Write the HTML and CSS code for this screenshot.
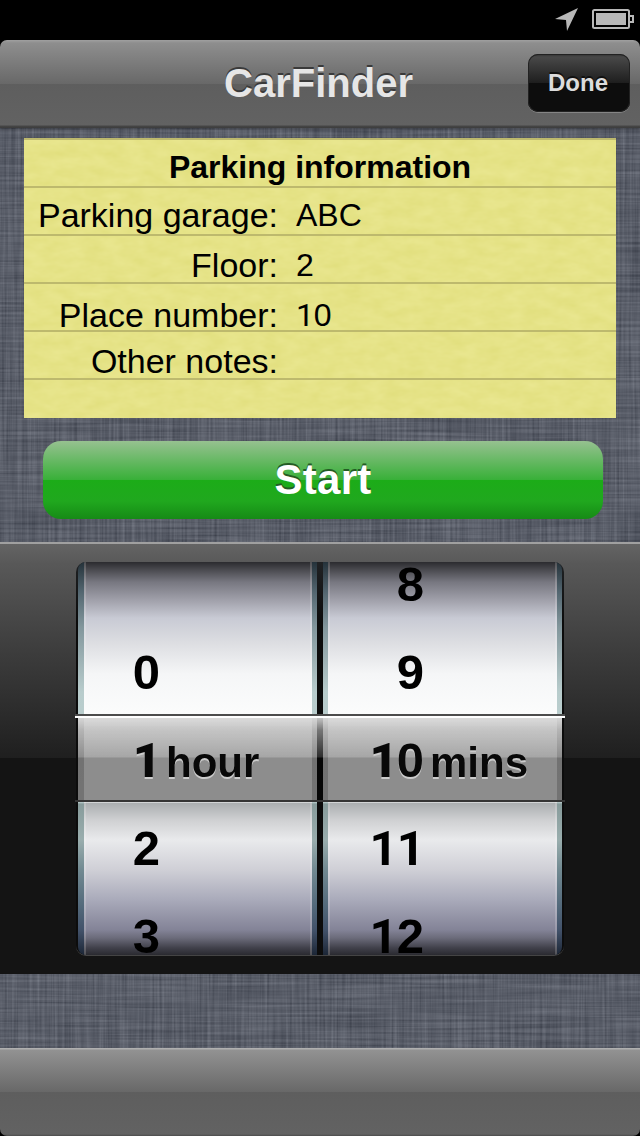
FILE: index.html
```html
<!DOCTYPE html>
<html lang="en">
<head>
<meta charset="utf-8">
<title>CarFinder</title>
<link rel="stylesheet" href="styles.css">
</head>
<body>
<div class="screen">
  <svg class="linen" width="640" height="1136" aria-hidden="true">
    <filter id="weave" x="0" y="0" width="100%" height="100%" color-interpolation-filters="sRGB">
      <feTurbulence type="fractalNoise" baseFrequency="0.01 0.4" numOctaves="2" seed="3"/>
      <feColorMatrix values="1 0 0 0 0  1 0 0 0 0  1 0 0 0 0  0 0 0 0 1" result="h"/>
      <feTurbulence type="fractalNoise" baseFrequency="0.4 0.01" numOctaves="2" seed="8"/>
      <feColorMatrix values="1 0 0 0 0  1 0 0 0 0  1 0 0 0 0  0 0 0 0 1" result="v"/>
      <feComposite in="h" in2="v" operator="arithmetic" k2=".5" k3=".5"/>
      <feColorMatrix values=".34 0 0 0 .18  .34 0 0 0 .197  .34 0 0 0 .24  0 0 0 0 1"/>
    </filter>
    <rect width="640" height="1136" filter="url(#weave)"/>
  </svg>

  <header class="status">
    <svg width="24" height="24" viewBox="0 0 24 24"><path d="M23 0 12 23 11 12 0 11Z" fill="#b8b8b8"/></svg>
    <svg width="42" height="20" viewBox="0 0 42 20"><rect x="1" y="1" width="36" height="18" rx="1.5" fill="none" stroke="#b8b8b8" stroke-width="2"/><rect x="4" y="4" width="30" height="12" fill="#b8b8b8"/><path d="M38 7h3v6h-3" fill="none" stroke="#b8b8b8" stroke-width="2"/></svg>
  </header>

  <div class="corners">
    <nav class="nav">
      <h1 class="title">CarFinder</h1>
      <button class="done">Done</button>
    </nav>
  </div>

  <main class="content">
    <section class="note">
      <svg class="grain" width="592" height="280" aria-hidden="true">
        <filter id="paper" x="0" y="0" width="100%" height="100%" color-interpolation-filters="sRGB">
          <feTurbulence type="fractalNoise" baseFrequency="0.05 0.1" numOctaves="3" seed="5"/>
          <feColorMatrix values=".04 0 0 0 .88  .04 0 0 0 .87  .09 0 0 0 .485  0 0 0 0 1"/>
        </filter>
        <rect width="592" height="280" filter="url(#paper)"/>
      </svg>
      <div class="rules"></div>
      <h2 class="heading">Parking information</h2>
      <dl class="fields">
        <dt>Parking garage:</dt><dd>ABC</dd>
        <dt>Floor:</dt><dd>2</dd>
        <dt>Place number:</dt><dd><span class="one">1</span>0</dd>
        <dt>Other notes:</dt><dd></dd>
      </dl>
    </section>
    <button class="start">Start</button>
  </main>

  <section class="picker">
    <div class="wheels">
      <div class="wheel hours"><span></span><span>0</span><span></span><span>2</span><span>3</span></div>
      <div class="wheel minutes"><span>8</span><span>9</span><span></span><span><i class="one">1</i><i class="one">1</i></span><span><i class="one">1</i>2</span></div>
      <div class="selection">
        <div class="pick hours-pick"><b><i class="one">1</i></b><span>hour</span></div>
        <div class="pick minutes-pick"><b><i class="one">1</i>0</b><span>mins</span></div>
      </div>
    </div>
  </section>

  <div class="corners bottom">
    <footer class="toolbar"></footer>
  </div>
</div>
</body>
</html>
```

FILE: styles.css
```css
* { box-sizing: border-box; margin: 0; padding: 0; }
body { background: #000; font-family: "Liberation Sans", Arial, sans-serif; }
button { border: 0; font-family: inherit; }
.screen {
  position: relative;
  display: flex;
  flex-direction: column;
  width: 640px;
  height: 1136px;
  overflow: hidden;
  isolation: isolate;
}
.linen { position: absolute; inset: 0; z-index: -1; }
.status {
  display: flex;
  justify-content: flex-end;
  gap: 13px;
  height: 40px;
  padding: 8px 6px 0 0;
  background: #000;
}
.status svg + svg { margin-top: 1px; }
.corners { background: #000; box-shadow: 0 1px 3px rgba(0,0,0,.4); }
.corners.bottom { margin-top: 74px; box-shadow: none; }
.nav {
  display: grid;
  grid-template-columns: 112px 1fr 112px;
  height: 88px;
  padding-right: 10px;
  background: linear-gradient(#a0a0a0 0, #8e8e8e 3px, #686868 44px, #5e5e5e 44px, #626262 85px, #464646 86px, #3c3c3c 88px);
  border-radius: 7px 7px 0 0;
}
.title {
  grid-column: 2;
  padding-left: 7px;
  color: #e6e6e6;
  font-size: 40px;
  line-height: 86px;
  text-align: center;
  text-shadow: 0 -2px 0 #3a3a3a;
}
.done {
  grid-column: 3;
  justify-self: end;
  width: 102px;
  height: 58px;
  margin-top: 14px;
  padding-right: 2px;
  border-radius: 10px;
  background: linear-gradient(#303030 0, #484848 3px, #1e1e1e 29px, #0d0d0d 29px, #0d0d0d);
  box-shadow: inset 0 0 0 1px #222, 0 1px 0 #858585;
  color: #dcdcdc;
  font-size: 24px;
  font-weight: bold;
  line-height: 55px;
  padding-bottom: 2px;
  text-shadow: 0 -2px 0 #111;
}
.content { height: 414px; padding: 10px 24px 0; }
.note { position: relative; height: 280px; padding-top: 6px; isolation: isolate; color: #000; }
.grain, .rules { position: absolute; inset: 0; z-index: -1; }
.rules { background: repeating-linear-gradient(#bdb96d 0 2px, transparent 2px 48px); }
.heading { font-size: 32px; line-height: 46px; text-align: center; }
.fields { display: grid; grid-template-columns: 254px 1fr; grid-template-rows: 50px 50px 50px 42px; column-gap: 18px; line-height: 50px; }
.fields dt { font-size: 34px; text-align: right; white-space: nowrap; }
.fields dd { font-size: 32px; }
.fields dt:last-of-type { line-height: 42px; }
.one { display: inline-block; width: .556em; font-family: Roboto, sans-serif; font-style: normal; line-height: 1; }
.start {
  display: block;
  width: 560px;
  height: 78px;
  margin: 23px 0 0 19px;
  border-radius: 18px;
  background: linear-gradient(#96c190 0, #38b038 39px, #1cac18 39px, #20a81e 60px, #168a16 78px);
  color: #fff;
  font-size: 42px;
  font-weight: bold;
  letter-spacing: .3px;
  line-height: 76px;
  text-shadow: 0 -2px 0 #245c24;
}
.picker {
  height: 432px;
  padding: 18px 76px 0;
  border-top: 2px solid #a0a0a0;
  background: linear-gradient(#646464 0, #585858 20px, #3c3c3c 110px, #1f1f1f 214px, #141414 214px);
}
.wheels {
  position: relative;
  display: grid;
  grid-template-columns: 239px 239px;
  column-gap: 6px;
  width: 488px;
  height: 393px;
  padding: 0 2px;
  border-radius: 10px;
  background: linear-gradient(#202224, #0c0c0c 60px);
  box-shadow: 0 1px 0 #444;
}
.wheel {
  position: relative;
  isolation: isolate;
  height: 393px;
  color: #000;
  font-size: 49px;
  font-weight: bold;
  font-kerning: none;
}
.wheel::before {
  content: "";
  position: absolute;
  inset: 0;
  z-index: -1;
  border: solid transparent;
  border-width: 0 5px 0 6px;
  background:
    linear-gradient(#2b2b2f 0, #47474c 7px, #777780 20px, #a0a0aa 38px, #c8cad4 56px, #dcdde1 80px, #f5f6f7 112px, #fbfcfc 152px, #fbfcfc 240px, #aaaeb0 241px, #cfd0d2 258px, #e9eaec 278px, #cfcfd6 308px, #a9aaba 338px, #838397 368px, #6b6b7a 376px, #40404a 386px, #2a2a30 393px) padding-box,
    linear-gradient(#25323a 0, #536670 30px, #82969c 65px, #b8cccc 130px, #c0d2d2 240px, #879b9b 242px, #99adad 278px, #718991 308px, #52687a 345px, #42526a 368px, #1c2636 393px) border-box;
  box-shadow: inset 2px 0 0 rgba(255,255,255,.18), inset -2px 0 0 rgba(255,255,255,.18);
}
.hours::before { clip-path: inset(0 round 8px 0 0 8px); }
.minutes::before { border-left-width: 5px; clip-path: inset(0 round 0 8px 8px 0); }
.wheel span { display: block; height: 88px; line-height: 88px; text-align: right; }
.wheel span:first-child { height: 66px; line-height: 44px; }
.wheel span:last-child { height: 63px; }
.hours span { width: 82px; }
.minutes span { width: 101px; }
.selection {
  position: absolute;
  top: 152px;
  left: -1px;
  display: grid;
  grid-template-columns: 245px 245px;
  width: 490px;
  height: 88px;
  border-bottom: 2px solid #343434;
  background:
    linear-gradient(#4c4c4c 0 2px, #fff 2px 4px, transparent 4px),
    linear-gradient(rgba(215,215,215,.9) 4px, rgba(170,170,170,.68) 16px, rgba(80,80,80,.5) 43px, rgba(0,0,0,.44) 44px, rgba(0,0,0,.44)) 3px 0 / 484px 100% no-repeat;
  backdrop-filter: grayscale(1);
}
.pick { display: flex; color: #080808; font-size: 42px; font-weight: bold; line-height: 98px; text-shadow: 0 2px 0 #ccc; }
.pick b { font-size: 49px; line-height: 92px; text-align: right; }
.hours-pick b { width: 85px; }
.minutes-pick b { width: 104px; }
.pick span { margin-left: 6px; }
.toolbar {
  height: 88px;
  border-radius: 0 0 7px 7px;
  background: linear-gradient(#b0b0b0 0 1px, #929292 2px, #686868 44px, #5e5e5e 44px, #626262 86px, #4c4c4c 88px);
}
```
